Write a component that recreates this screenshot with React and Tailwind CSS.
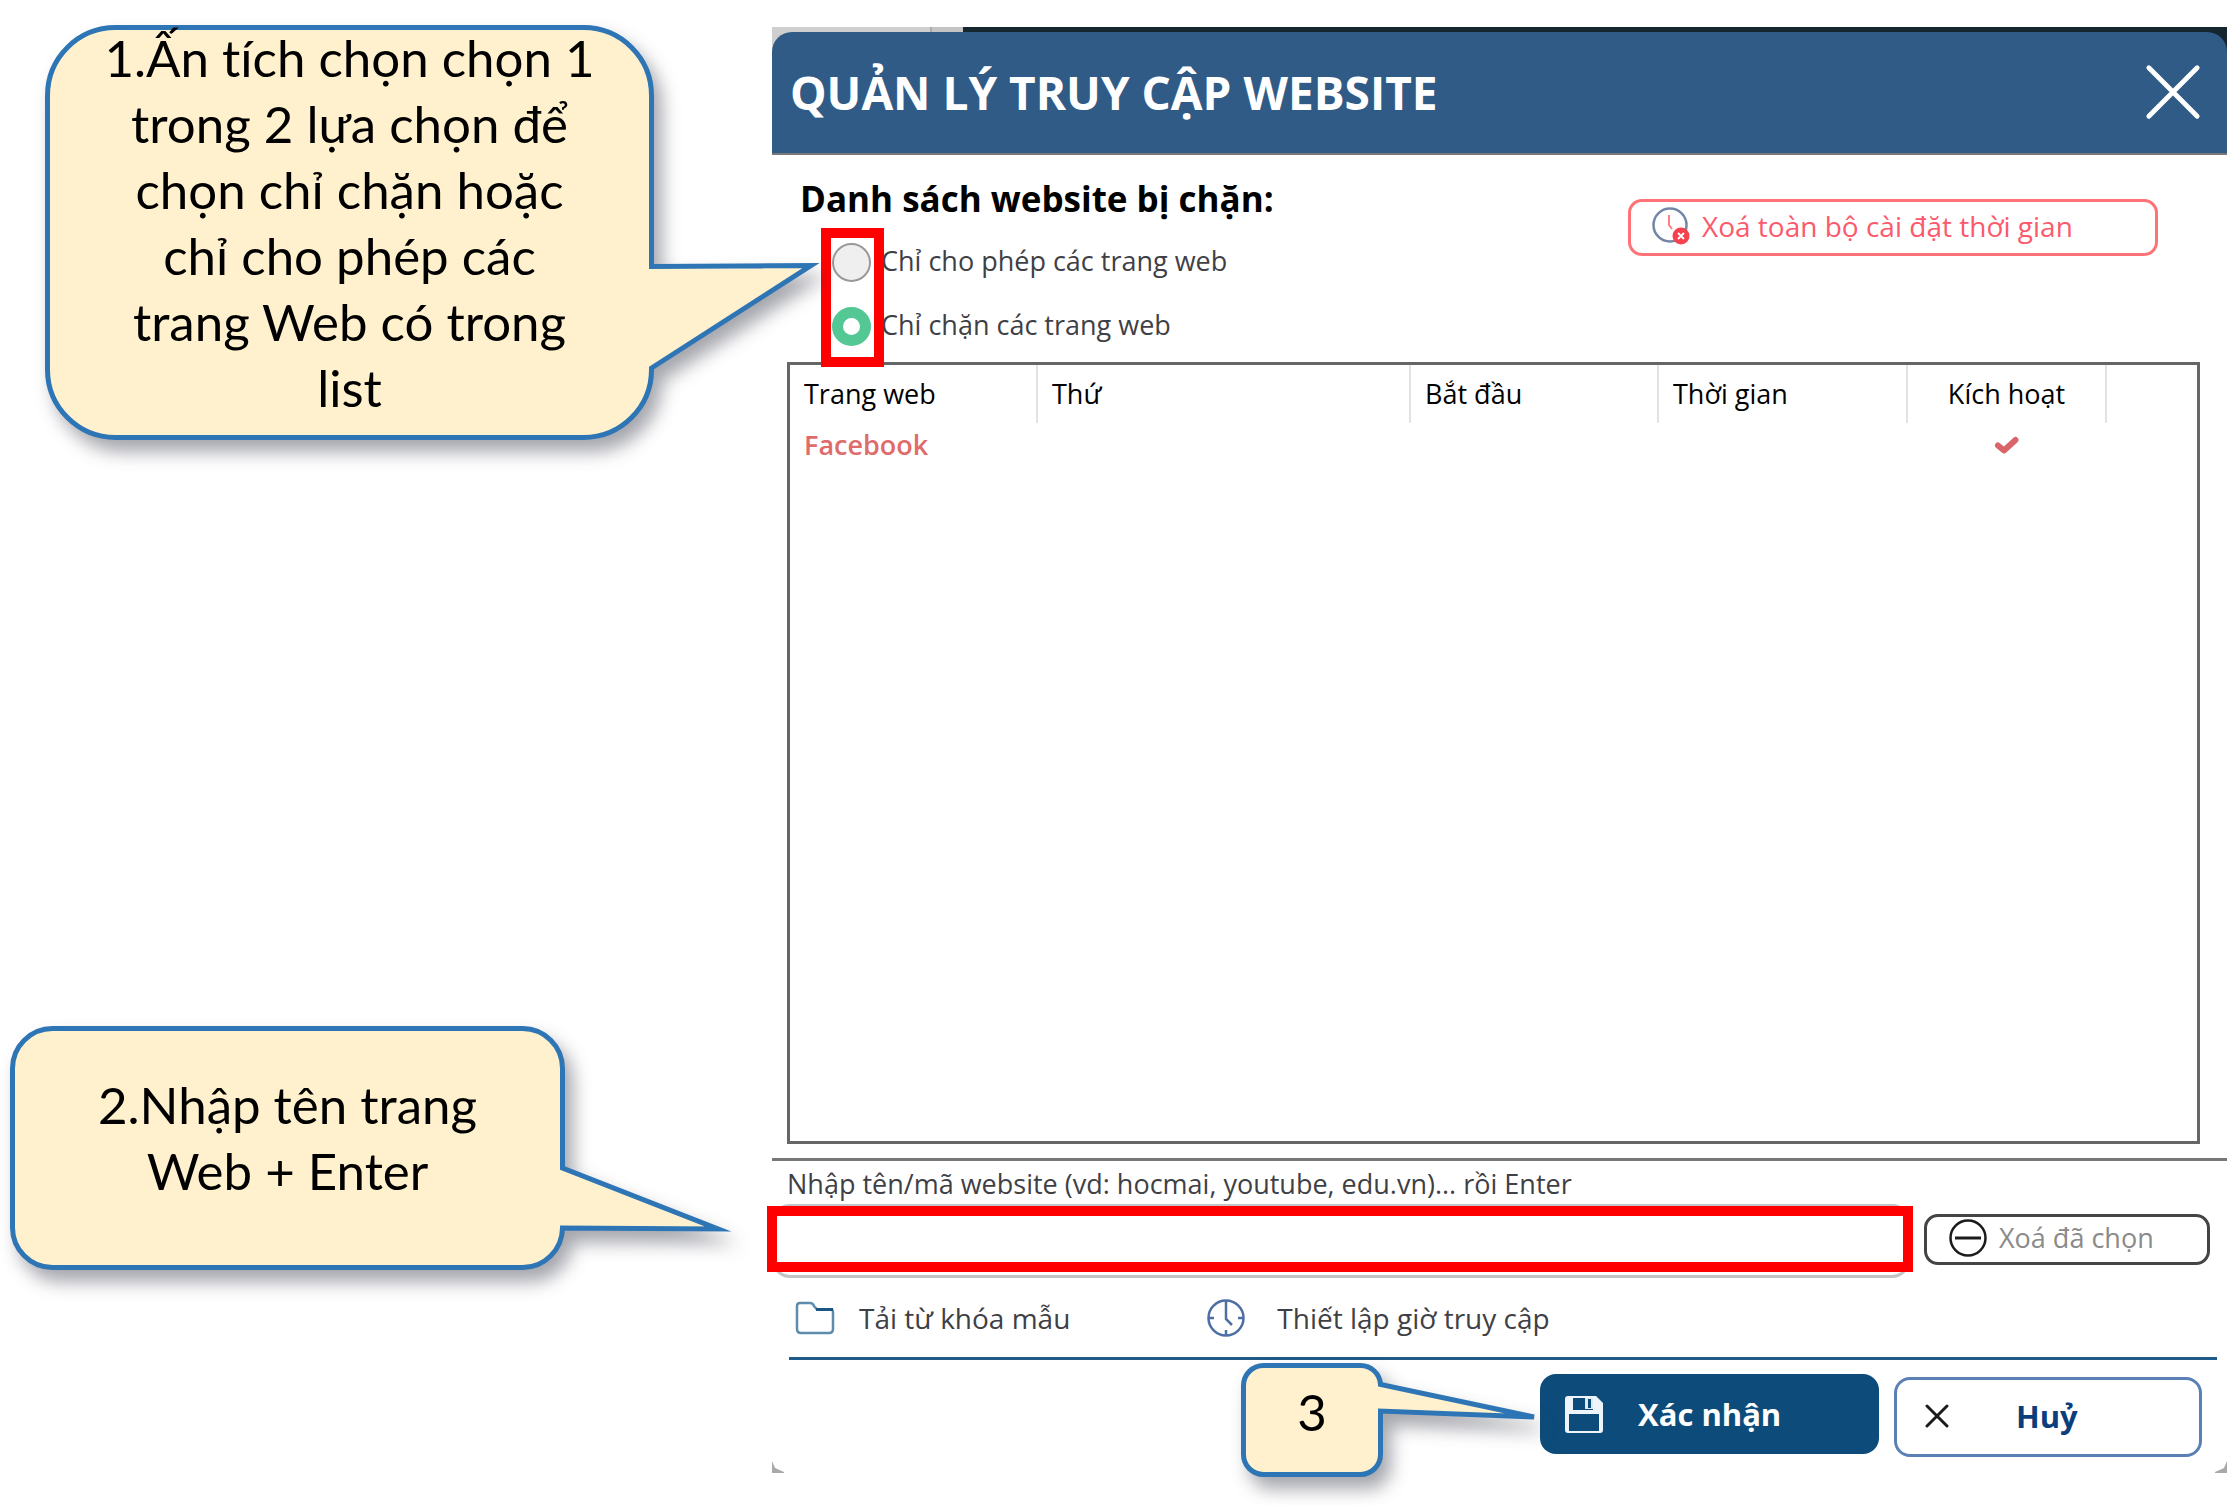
import React from "react";

function Callout({ className, viewBox, path, textClass, children }) {
  return (
    <div className={`absolute z-20 flex justify-center ${className}`}>
      <svg
        aria-hidden="true"
        viewBox={viewBox}
        className="absolute inset-0 h-full w-full overflow-visible drop-shadow-[8px_12px_9px_rgba(40,44,60,0.42)]"
      >
        <path d={path} fill="#fff1cd" stroke="#2e75b6" strokeWidth="5" strokeMiterlimit="8" />
      </svg>
      <p className={`relative text-center text-[51px] leading-[66px] whitespace-nowrap text-black [font-variant-ligatures:none] font-[Lato,'Open_Sans',sans-serif] ${textClass}`}>
        {children}
      </p>
    </div>
  );
}

function ClockIcon() {
  return (
    <svg aria-hidden="true" viewBox="0 0 40 38" className="h-[38px] w-10" fill="none" stroke="#4d6fa3">
      <circle cx="20" cy="19" r="17.5" strokeWidth="2.5" />
      <path d="M20 2v5M20 31v5M3 19h5M32 19h5" strokeWidth="2.5" />
      <path d="M20 7v13l6 6" strokeWidth="2.5" />
    </svg>
  );
}

function ClockRemoveIcon() {
  return (
    <svg aria-hidden="true" viewBox="0 0 38 38" className="h-[38px] w-[38px]" fill="none">
      <circle cx="18" cy="18" r="16.5" stroke="#7386a8" strokeWidth="2.5" />
      <path d="M17 8v10l3 4" stroke="#ff7f86" strokeWidth="2" />
      <circle cx="29" cy="29" r="8.5" fill="#f4434f" />
      <path d="M26 26l6 6M32 26l-6 6" stroke="#fff" strokeWidth="1.8" />
    </svg>
  );
}

function FolderIcon() {
  return (
    <svg aria-hidden="true" viewBox="0 0 40 34" className="h-[34px] w-10" fill="none">
      <path
        d="M2 28V5q0-3 3-3h10q3 0 4 3l3 3.500h14q2 0 2 3v16.500q0 4-4 4H6q-4 0-4-4z"
        stroke="#5d8cad"
        strokeWidth="2.5"
      />
      <path d="M21 8.500h17" stroke="#1b5583" strokeWidth="3" />
    </svg>
  );
}

function SaveIcon() {
  return (
    <svg aria-hidden="true" viewBox="0 0 38 37" className="h-[37px] w-[38px]">
      <path d="M3 0h28l7 7v27q0 3-3 3H3q-3 0-3-3V3q0-3 3-3z" fill="#eef4f9" />
      <path d="M8 2h20v12H8z" fill="#0d4c7a" />
      <path d="M20 2h8v11h-8z" fill="#dfe9f1" />
      <path d="M23 3h3v9h-3z" fill="#0d4c7a" />
      <path d="M4 18h30v17H4z" fill="#0d4c7a" />
    </svg>
  );
}

function MinusCircleIcon() {
  return (
    <svg aria-hidden="true" viewBox="0 0 38 38" className="h-[38px] w-[38px]" fill="none" stroke="#1c1c1c" strokeWidth="2.5">
      <circle cx="19" cy="19" r="17.5" />
      <path d="M6 19h26" strokeWidth="3" />
    </svg>
  );
}

function CrossIcon({ className, width }) {
  return (
    <svg aria-hidden="true" viewBox="0 0 24 24" className={className} fill="none" stroke="currentColor" strokeWidth={width} strokeLinecap="round">
      <path d="M2 2l20 20M22 2L2 22" />
    </svg>
  );
}

const radioClass =
  "h-[39px] w-[39px] appearance-none rounded-full border-2 border-[#999] bg-[#efefef] checked:border-[11px] checked:border-[#53c794] checked:bg-white";

const columns = ["Trang web", "Thứ", "Bắt đầu", "Thời gian"];

export default function App() {
  return (
    <div className="relative flex bg-white pb-8 pt-[27px] font-['Open_Sans','Noto_Sans',sans-serif] text-[#3f3f46]">
      <aside className="w-[772px] shrink-0">
        <Callout
          className="left-[45px] top-[25px] h-[415px] w-[609px]"
          viewBox="0 0 609 415"
          path="M70.5 2.5H538.5A68 68 0 0 1 606.5 70.5V241.5L766 240.5L606.5 343V344.5A68 68 0 0 1 538.5 412.5H70.5A68 68 0 0 1 2.5 344.5V70.5A68 68 0 0 1 70.5 2.5Z"
          textClass=""
        >
          1.Ấn tích chọn chọn 1<br />trong 2 lựa chọn để<br />chọn chỉ chặn hoặc<br />chỉ cho phép các<br />trang Web có trong<br />list
        </Callout>
        <Callout
          className="left-[10px] top-[1026px] h-[244px] w-[555px]"
          viewBox="0 0 555 244"
          path="M42.5 2.5H512.5A40 40 0 0 1 552.5 42.5V142L708 203L552.5 202A40 40 0 0 1 512.5 241.5H42.5A40 40 0 0 1 2.5 201.5V42.5A40 40 0 0 1 42.5 2.5Z"
          textClass="pt-[46px]"
        >
          2.Nhập tên trang<br />Web + Enter
        </Callout>
        <Callout
          className="left-[1241px] top-[1363px] h-[114px] w-[142px]"
          viewBox="0 0 142 114"
          path="M22.5 2.5H119.5A20 20 0 0 1 139.5 21.5L293 54L139.5 48V91.5A20 20 0 0 1 119.5 111.5H22.5A20 20 0 0 1 2.5 91.5V22.5A20 20 0 0 1 22.5 2.5Z"
          textClass="pt-4"
        >
          3
        </Callout>
      </aside>

      <main className="relative min-w-0 flex-1">
        <div className="bg-[linear-gradient(90deg,#cfcfcf_0_158px,#aaa_158px_160px,#c4c4c4_160px_191px,#16262e_191px)] pt-[5px]">
          <header className="flex h-[123px] items-center justify-between rounded-t-[20px] border-b-2 border-[#777] bg-[#305b86] pb-0.5 pl-[18px] pr-[25px] text-white">
            <h1 className="text-[46px] font-bold leading-[60px]">QUẢN LÝ TRUY CẬP WEBSITE</h1>
            <button type="button" aria-label="Đóng">
              <CrossIcon className="h-[58px] w-[58px]" width="2" />
            </button>
          </header>
        </div>

        <section className="flex h-[207px] items-start justify-between pl-[28px] pr-[69px] pt-5">
          <fieldset className="relative">
            <legend className="text-[35px] font-bold leading-[48px] text-black">Danh sách website bị chặn:</legend>
            <div className="mt-5 flex flex-col gap-[25px] pl-8 text-[27px] leading-[36px]">
              <label className="flex items-start gap-[10px]">
                <input type="radio" name="mode" className={radioClass} />
                Chỉ cho phép các trang web
              </label>
              <label className="flex items-start gap-[10px]">
                <input type="radio" name="mode" defaultChecked className={radioClass} />
                Chỉ chặn các trang web
              </label>
            </div>
            <div className="pointer-events-none absolute left-[21px] top-[5px] z-10 h-[139px] w-[63px] border-[10px] border-[#ff0000]" />
          </fieldset>
          <button
            type="button"
            className="mt-6 flex h-[57px] w-[530px] items-center gap-3 rounded-[14px] border-[3px] border-[#ff7277] pb-[3px] pl-[21px] text-[28px] text-[#fb5a6c]"
          >
            <ClockRemoveIcon />
            Xoá toàn bộ cài đặt thời gian
          </button>
        </section>

        <div className="ml-[15px] mr-[27px] h-[782px] border-[3px] border-[#666]">
          <table className="w-full table-fixed text-left text-[27px] text-black">
            <colgroup>
              <col className="w-[247px]" />
              <col className="w-[373px]" />
              <col className="w-[248px]" />
              <col className="w-[249px]" />
              <col className="w-[199px]" />
              <col />
            </colgroup>
            <thead>
              <tr className="h-[58px]">
                {columns.map((c) => (
                  <th key={c} scope="col" className="border-r-2 border-[#e2e2e2] pl-[14px] font-normal">
                    {c}
                  </th>
                ))}
                <th scope="col" className="border-r-2 border-[#e2e2e2] text-center font-normal">Kích hoạt</th>
                <td />
              </tr>
            </thead>
            <tbody>
              <tr className="h-[44px] text-[#e06b6b]">
                <td className="pl-[14px] font-semibold">Facebook</td>
                <td />
                <td />
                <td />
                <td>
                  <svg role="img" aria-label="Đã kích hoạt" viewBox="0 0 26 18" className="mx-auto h-[18px] w-[26px]" fill="none" stroke="#d9646a" strokeWidth="6">
                    <path d="M4 9.500L10 14.500L21.500 4" strokeLinejoin="round" strokeLinecap="round" />
                  </svg>
                </td>
                <td />
              </tr>
            </tbody>
          </table>
        </div>

        <section className="mt-[14px] border-t-[3px] border-[#777]">
          <label htmlFor="site" className="block pl-[15px] pt-[3px] text-[27px] leading-[40px]">
            Nhập tên/mã website (vd: hocmai, youtube, edu.vn)... rồi Enter
          </label>
          <div className="flex h-[74px] items-start justify-between pr-[17px]">
            <div className="relative h-full w-[1138px]">
              <input
                id="site"
                type="text"
                className="h-full w-full rounded-[18px] border-[3px] border-[#c4c4c4] bg-white px-5 text-[27px] outline-none"
              />
              <div className="pointer-events-none absolute -left-[5px] top-0.5 h-[66px] w-[1146px] border-[10px] border-[#ff0000]" />
            </div>
            <button
              type="button"
              className="mt-2.5 flex h-[51px] w-[286px] items-center gap-3 rounded-[14px] border-[3px] border-[#444] pb-[3px] pl-[22px] text-[27px] text-[#8a8a8a]"
            >
              <MinusCircleIcon />
              Xoá đã chọn
            </button>
          </div>
        </section>

        <div className="ml-[17px] mr-[10px] flex h-[82px] items-center gap-[136px] border-b-[3px] border-[#1f5a88] pl-[6px] text-[28px]">
          <button type="button" className="flex items-center gap-6">
            <FolderIcon />
            Tải từ khóa mẫu
          </button>
          <button type="button" className="flex items-center gap-[31px]">
            <ClockIcon />
            Thiết lập giờ truy cập
          </button>
        </div>

        <footer className="flex items-end justify-end gap-[15px] pr-[25px] pt-[14px] text-[31px] font-bold">
          <button type="button" className="mb-[3px] flex h-[80px] w-[339px] items-center gap-[35px] rounded-[16px] bg-[#0d4c7a] pl-[25px] text-white">
            <SaveIcon />
            Xác nhận
          </button>
          <button
            type="button"
            className="flex h-[80px] w-[308px] items-center gap-[67px] rounded-[16px] border-[3px] border-[#5b80b5] pb-0.5 pl-7 text-[#0b3f7c]"
          >
            <CrossIcon className="h-6 w-6 text-[#1c1c1c]" width="3" />
            Huỷ
          </button>
        </footer>
        <div aria-hidden="true" className="flex justify-between pt-1">
          <svg viewBox="0 0 12 12" className="h-3 w-3"><path d="M0 0l3 7 9 4v1H0z" fill="#a9a9a9" /></svg>
          <svg viewBox="0 0 12 12" className="h-3 w-3"><path d="M12 0l-3 7-9 4v1h12z" fill="#a9a9a9" /></svg>
        </div>
      </main>
    </div>
  );
}
